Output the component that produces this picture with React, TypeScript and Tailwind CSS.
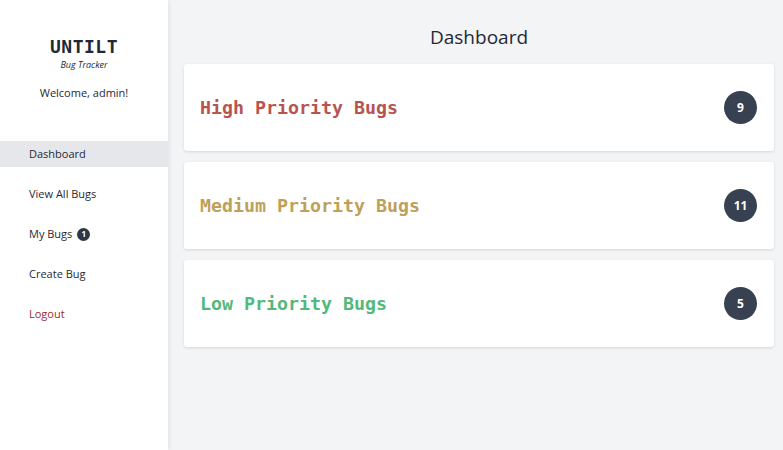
import { useState } from 'react';

const cards = [
  { title: 'High Priority Bugs', count: 9, color: 'text-[#b85450]' },
  { title: 'Medium Priority Bugs', count: 11, color: 'text-[#bfa05a]' },
  { title: 'Low Priority Bugs', count: 5, color: 'text-[#52b97a]' },
];

const links = ['Dashboard', 'View All Bugs', 'My Bugs', 'Create Bug'];

export default function App() {
  const [active, setActive] = useState('Dashboard');

  return (
    <div className="flex h-[450px] w-full bg-[#f3f4f6] font-['Open_Sans',sans-serif] text-[#1f2937]">
      <aside className="relative z-10 flex w-[168px] shrink-0 flex-col bg-white shadow-[2px_0_4px_rgba(0,0,0,0.06)]">
        <div className="flex flex-col items-center pt-[36px]">
          <h1 className="font-['DejaVu_Sans_Mono',monospace] text-[18px] font-bold leading-[22px] tracking-[0.5px] text-[#1f2937]">
            UNTILT
          </h1>
          <p className="mt-[1px] text-[9px] italic leading-[12px]">Bug Tracker</p>
          <p className="mt-[14px] text-[11px] leading-[16px]">Welcome, admin!</p>
        </div>
        <nav className="mt-[40px] flex flex-col gap-[14px] text-[11px]">
          {links.map((l) => (
            <button
              key={l}
              onClick={() => setActive(l)}
              className={`flex h-[26px] items-center gap-[5px] pl-[29px] text-left ${active === l ? 'bg-[#e5e7eb]' : ''}`}
            >
              {l}
              {l === 'My Bugs' && (
                <span className="flex h-[13px] w-[13px] items-center justify-center rounded-full bg-[#2d3748] text-[8px] font-bold text-white">
                  1
                </span>
              )}
            </button>
          ))}
          <button className="flex h-[26px] items-center pl-[29px] text-left text-[#9b2c2c]">Logout</button>
        </nav>
      </aside>
      <main className="flex flex-1 flex-col pl-[16px] pr-[9px]">
        <h2 className="pt-[24px] pb-[14px] text-center text-[19px] font-medium leading-[26px] text-[#1f2937]">
          Dashboard
        </h2>
        <div className="flex flex-col gap-[11px]">
          {cards.map((c) => (
            <div
              key={c.title}
              className="flex h-[87px] items-center justify-between rounded-[3px] bg-white pl-[16px] pr-[17px] shadow-[0_1px_3px_rgba(0,0,0,0.12)]"
            >
              <span className={`font-['DejaVu_Sans_Mono',monospace] text-[18.3px] font-bold ${c.color}`}>{c.title}</span>
              <span className="flex h-[33px] w-[33px] items-center justify-center rounded-full bg-[#374151] text-[12px] font-bold text-white">
                {c.count}
              </span>
            </div>
          ))}
        </div>
      </main>
    </div>
  );
}
